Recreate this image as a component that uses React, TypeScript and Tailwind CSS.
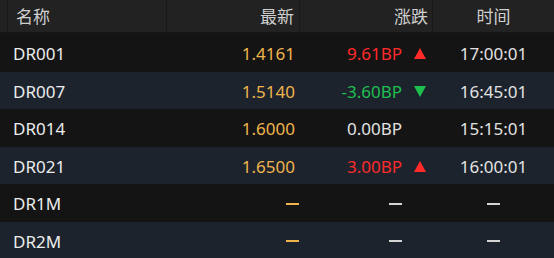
import React from 'react';

type Row = {
  name: string;
  latest: string;
  change: string;
  dir: 'up' | 'down' | 'flat' | 'none';
  time: string;
};

const rows: Row[] = [
  { name: 'DR001', latest: '1.4161', change: '9.61BP', dir: 'up', time: '17:00:01' },
  { name: 'DR007', latest: '1.5140', change: '-3.60BP', dir: 'down', time: '16:45:01' },
  { name: 'DR014', latest: '1.6000', change: '0.00BP', dir: 'flat', time: '15:15:01' },
  { name: 'DR021', latest: '1.6500', change: '3.00BP', dir: 'up', time: '16:00:01' },
  { name: 'DR1M', latest: '', change: '', dir: 'none', time: '' },
  { name: 'DR2M', latest: '', change: '', dir: 'none', time: '' },
];

const Dash = ({ color }: { color: string }) => (
  <span className={`block h-[2px] w-[13px] ${color}`} />
);

const Arrow = ({ dir }: { dir: Row['dir'] }) => {
  if (dir === 'up')
    return (
      <svg width="12" height="11" viewBox="0 0 12 11">
        <polygon points="6,0 12,11 0,11" fill="#ff2a2a" />
      </svg>
    );
  if (dir === 'down')
    return (
      <svg width="12" height="11" viewBox="0 0 12 11">
        <polygon points="0,0 12,0 6,11" fill="#1fbf4f" />
      </svg>
    );
  return <span className="block w-[12px]" />;
};

const App: React.FC = () => {
  return (
    <div
      className="w-[554px] h-[258px] bg-[#141414] overflow-hidden text-[17px]"
      style={{ fontFamily: '"Noto Sans", "Noto Sans CJK SC", sans-serif' }}
    >
      {/* header */}
      <div className="grid grid-cols-[167px_133px_133px_1fr] h-[34px] bg-[#222222] border-b-2 border-[#161616] text-[#cfcfcf]">
        <div className="ml-[7px] border-l border-r border-[#191919] flex items-center pl-[8px] pt-[1px]">名称</div>
        <div className="border-r border-[#191919] flex items-center justify-end pr-[5px] pt-[1px]">最新</div>
        <div className="border-r border-[#191919] flex items-center justify-end pr-[4px] pt-[1px]">涨跌</div>
        <div className="flex items-center justify-center pt-[1px]">时间</div>
      </div>

      {/* body */}
      {rows.map((r, i) => {
        const changeColor =
          r.dir === 'up' ? 'text-[#ff2a2a]' : r.dir === 'down' ? 'text-[#1fbf4f]' : 'text-[#e2e2e2]';
        return (
          <div
            key={r.name}
            className={`grid grid-cols-[167px_133px_133px_1fr] h-[37.5px] items-center pt-[2px] ${
              i % 2 === 0 ? 'bg-[#141414]' : 'bg-[#1c232d]'
            }`}
          >
            <div className="pl-[13px] text-[#ececec]">{r.name}</div>
            <div className="flex justify-end items-center pr-[5px] text-[#f0b44c]">
              {r.latest ? r.latest : <span className="mr-[-4px]"><Dash color="bg-[#f0b44c]" /></span>}
            </div>
            <div className="flex justify-end items-center pr-[7px] gap-[12px]">
              {r.change ? (
                <span className={changeColor}>{r.change}</span>
              ) : (
                <Dash color="bg-[#d4d4d4]" />
              )}
              <Arrow dir={r.dir} />
            </div>
            <div className="flex justify-center items-center text-[#e2e2e2]">
              {r.time ? r.time : <Dash color="bg-[#d4d4d4]" />}
            </div>
          </div>
        );
      })}
      <div className="h-[3px] bg-[repeating-linear-gradient(90deg,#56606c_0_4px,#2a3038_4px_5px)]" />
    </div>
  );
};

export default App;
